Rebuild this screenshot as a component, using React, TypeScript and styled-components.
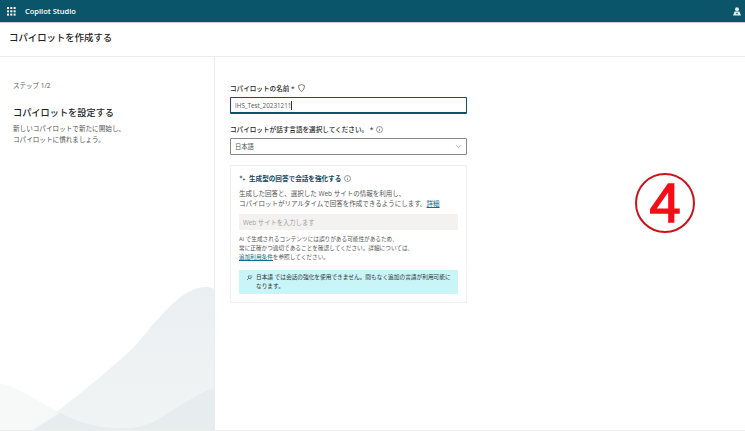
import styled, { createGlobalStyle } from 'styled-components'
import { ChevronDown } from 'lucide-react'

const GlobalStyle = createGlobalStyle`
  html, body {
    margin: 0;
    padding: 0;
    background: #fff;
  }
  * {
    box-sizing: border-box;
  }
  #root {
    font-family: "Open Sans", "Noto Sans CJK JP", sans-serif;
    color: #242424;
  }
`

const Page = styled.div`
  position: relative;
  display: flex;
  flex-direction: column;
  width: 745px;
  height: 431px;
  overflow: hidden;
`

const TopBar = styled.header`
  display: flex;
  flex: none;
  align-items: center;
  justify-content: space-between;
  height: 23px;
  padding: 0 4px 0 7px;
  color: #fff;
  background: #0b556a;
  border-bottom: 1px solid #c9cfd2;
`

const Brand = styled.div`
  display: flex;
  gap: 9px;
  align-items: center;
  font-size: 7.5px;
  font-weight: 600;
`

const TitleBar = styled.div`
  display: flex;
  flex: none;
  align-items: center;
  height: 34px;
  padding: 0 0 6px 9px;
  border-bottom: 1px solid #ececec;
`

const PageTitle = styled.h1`
  margin: 0;
  font-size: 9.4px;
  font-weight: 500;
`

const Body = styled.div`
  display: flex;
  flex: 1;
  min-height: 0;
  border-bottom: 1px solid #ececec;
`

const Sidebar = styled.aside`
  position: relative;
  flex: none;
  width: 215px;
  padding: 24px 13px 0;
  border-right: 1px solid #ececec;
`

const Step = styled.div`
  height: 10px;
  font-size: 6.5px;
  line-height: 10px;
  color: #555;
`

const SideTitle = styled.h2`
  margin: 14px 0 4px;
  font-size: 9.2px;
  font-weight: 500;
`

const SideText = styled.p`
  margin: 0;
  font-size: 6.6px;
  line-height: 11px;
  color: #555;
`

const Wave = styled.svg`
  position: absolute;
  bottom: 0;
  left: 0;
`

const Main = styled.main`
  width: 237px;
  margin-left: 15px;
  padding-top: 26px;
`

const Label = styled.div`
  display: flex;
  gap: 3px;
  align-items: center;
  height: 10px;
  margin-bottom: 4px;
  font-size: 6.6px;
  font-weight: 500;
`

const Field = styled.div<{ $focused?: boolean }>`
  display: flex;
  align-items: center;
  justify-content: space-between;
  height: 17px;
  margin-bottom: 10px;
  padding: 0 3px 0 4px;
  font-size: 6.3px;
  color: #555;
  border: 1px solid ${(props) => (props.$focused ? '#0b556a' : '#8a8a8a')};
  border-bottom-width: ${(props) => (props.$focused ? '2px' : '1px')};
  border-radius: 1px;
`

const Caret = styled.span`
  width: 1px;
  height: 9px;
  background: #333;
`

const FieldValue = styled.span`
  display: flex;
  align-items: center;
`

const Card = styled.section`
  height: 138px;
  padding: 7px 8px 0;
  border: 1px solid #f0f0f0;
`

const CardTitle = styled.div`
  display: flex;
  gap: 3px;
  align-items: center;
  height: 10px;
  font-size: 6.6px;
  font-weight: 700;
  color: #17495e;
`

const CardText = styled.p`
  margin: 6px 0 0;
  font-size: 6.5px;
  line-height: 10px;
  color: #555;
`

const Link = styled.a`
  color: #0f6c85;
  text-decoration: underline;
`

const SiteInput = styled.div`
  display: flex;
  align-items: center;
  height: 16px;
  margin-top: 5px;
  padding-left: 4px;
  font-size: 6.3px;
  color: #a19f9d;
  background: #f3f2f1;
`

const Notice = styled.p`
  margin: 5px 0 0;
  font-size: 5.65px;
  line-height: 9px;
  color: #555;
`

const InfoBox = styled.div`
  display: flex;
  gap: 3px;
  height: 24px;
  margin-top: 8px;
  padding: 3px 0 0 7px;
  font-size: 5.7px;
  line-height: 9px;
  color: #333;
  white-space: nowrap;
  background: #c9f5f8;
`

const InfoIcon = styled.svg`
  flex: none;
  margin-top: 1px;
`

const Annotation = styled.div`
  position: absolute;
  top: 173px;
  left: 635px;
  display: flex;
  align-items: center;
  justify-content: center;
  width: 60px;
  height: 60px;
  font-family: "Liberation Sans", sans-serif;
  font-size: 56px;
  line-height: 1;
  color: #f50d16;
  border: 2px solid #c8141c;
  border-radius: 50%;
  -webkit-text-stroke: 1.5px #f50d16;
`

function Waffle() {
  const dots = [0, 1, 2].flatMap((y) => [0, 1, 2].map((x) => [x, y]))
  return (
    <svg width="9" height="9" viewBox="0 0 9 9" fill="#fff">
      {dots.map(([x, y]) => (
        <rect key={`${x}-${y}`} x={x * 3.3} y={y * 3.3} width="2" height="2" />
      ))}
    </svg>
  )
}

function InfoCircle() {
  return (
    <svg width="7" height="7" viewBox="0 0 7 7" fill="none" stroke="#555" strokeWidth="0.6">
      <circle cx="3.5" cy="3.5" r="3" />
      <path d="M3.5 3.1v2M3.5 1.8v.6" />
    </svg>
  )
}

function App() {
  return (
    <Page>
      <GlobalStyle />
      <TopBar>
        <Brand>
          <Waffle />
          Copilot Studio
        </Brand>
        <svg width="8" height="9" viewBox="0 0 8 9" fill="#dfeaed">
          <circle cx="4" cy="2.2" r="2" />
          <path d="M0 8.500 1.600 4.600h4.800L8 8.500z" />
          <circle cx="4" cy="6.500" r="0.800" fill="#0b556a" />
        </svg>
      </TopBar>
      <TitleBar>
        <PageTitle>コパイロットを作成する</PageTitle>
      </TitleBar>
      <Body>
        <Sidebar>
          <Step>ステップ 1/2</Step>
          <SideTitle>コパイロットを設定する</SideTitle>
          <SideText>
            新しいコパイロットで新たに開始し、
            <br />
            コパイロットに慣れましょう。
          </SideText>
          <Wave width="214" height="146" viewBox="0 0 214 146">
            <defs>
              <linearGradient id="waveFront" x1="0" y1="0" x2="0" y2="1">
                <stop offset="0" stopColor="#eaeff1" />
                <stop offset="1" stopColor="#f1f4f5" />
              </linearGradient>
            </defs>
            <path d="M33 146C60 125 80 110 100 93 120 76 130 68 140 56 155 38 165 26 177 16 190 5 203 0 214 5V146Z" fill="url(#waveFront)" />
            <path d="M0 99C20 104 40 118 60 129 80 139 100 144 117 144 130 145 143 143 155 137 175 126 195 110 214 104V146H0Z" fill="#f4f7f7" opacity="0.7" />
            <path d="M33 146 60 129C80 139 100 144 117 144 130 145 143 143 155 137 175 126 195 110 214 104V146Z" fill="#e7ecee" />
          </Wave>
        </Sidebar>
        <Main>
          <Label>
            コパイロットの名前 *
            <svg width="7" height="8" viewBox="0 0 7 8" fill="none" stroke="#444" strokeWidth="0.7">
              <path d="M3.500.6 6.400 1.500C6.400 4.500 5.500 6.400 3.500 7.400 1.500 6.400.6 4.500.6 1.500Z" />
            </svg>
          </Label>
          <Field $focused>
            <FieldValue>
              IHS_Test_20231211
              <Caret />
            </FieldValue>
          </Field>
          <Label>
            コパイロットが話す言語を選択してください。 *
            <InfoCircle />
          </Label>
          <Field>
            日本語
            <ChevronDown size={9} color="#777" strokeWidth={1.5} />
          </Field>
          <Card>
            <CardTitle>
              <svg width="7" height="7" viewBox="0 0 7 7" fill="#355">
                <path d="M2 0l.5 1.500L4 2l-1.500.5L2 4l-.5-1.500L0 2l1.500-.5zM5 3l.4 1.100L6.500 4.500l-1.100.4L5 6l-.4-1.100L3.500 4.500l1.100-.4z" />
              </svg>
              生成型の回答で会話を強化する
              <InfoCircle />
            </CardTitle>
            <CardText>
              生成した回答と、選択した Web サイトの情報を利用し、
              <br />
              コパイロットがリアルタイムで回答を作成できるようにします。<Link>詳細</Link>
            </CardText>
            <SiteInput>Web サイトを入力します</SiteInput>
            <Notice>
              AI で生成されるコンテンツには誤りがある可能性があるため、
              <br />
              常に正確かつ適切であることを確認してください。詳細については、
              <br />
              <Link>追加利用条件</Link>を参照してください。
            </Notice>
            <InfoBox>
              <InfoIcon width="7" height="7" viewBox="0 0 7 7" fill="none" stroke="#456" strokeWidth="0.7">
                <path d="M1 6 3 4M3 1.500 5.500 4 4 5 2 3zM4.500 1 6 2.500" />
              </InfoIcon>
              <span>
                日本語 では会話の強化を使用できません。間もなく追加の言語が利用可能に
                <br />
                なります。
              </span>
            </InfoBox>
          </Card>
        </Main>
      </Body>
      <Annotation>4</Annotation>
    </Page>
  )
}

export default App
